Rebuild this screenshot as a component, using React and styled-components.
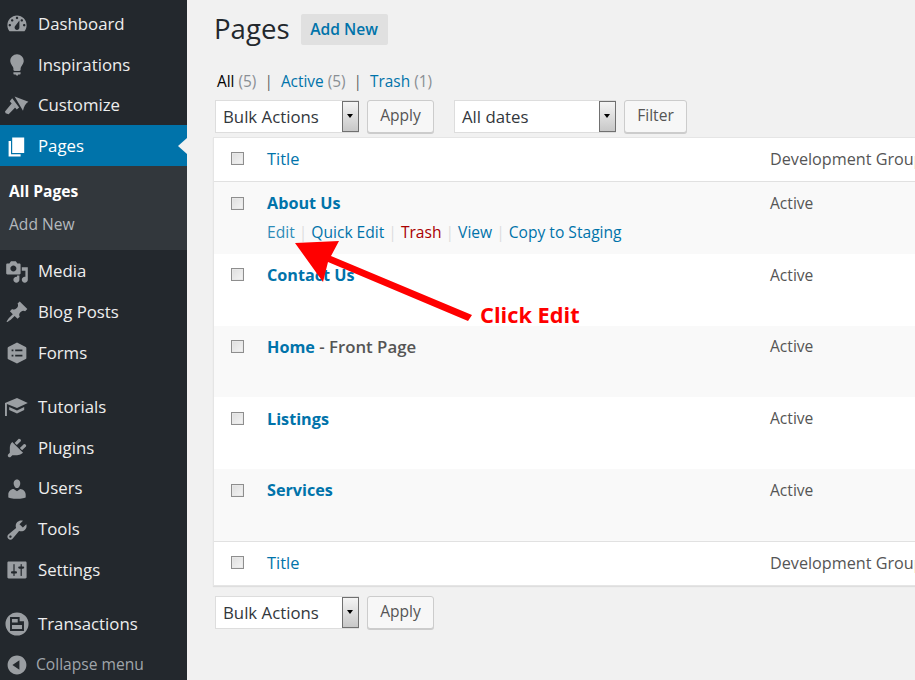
import React from "react";
import styled, { createGlobalStyle } from "styled-components";

const Global = createGlobalStyle`
  html, body { margin: 0; padding: 0; height: 680px; overflow: hidden; background: #f1f1f1; }
  body { font-family: "Open Sans", "Noto Sans", sans-serif; font-size: 16.8px; color: #444; }
`;

const Page = styled.div`
  position: relative;
  display: flex;
  width: 915px;
  height: 680px;
  overflow: hidden;
`;
const Sidebar = styled.nav`
  flex: 0 0 187px;
  background: #23282d;
  padding-top: 3px;
  box-sizing: border-box;
  overflow: hidden;
`;
const MenuItem = styled.div`
  position: relative;
  display: flex;
  align-items: center;
  box-sizing: border-box;
  height: 40.8px;
  padding-top: 1.6px;
  margin-top: ${(p) => (p.$sep ? "13.2px" : "0")};
  color: ${(p) => (p.$active ? "#fff" : "#eee")};
  background: ${(p) => (p.$active ? "#0073aa" : "transparent")};
  line-height: 1;
  font-size: 16.8px;
  white-space: nowrap;
  svg { flex: 0 0 24px; margin-left: 5px; margin-right: 9px; fill: ${(p) => (p.$active ? "#fff" : "#9a9ea2")}; }
`;
const Notch = styled.span`
  position: absolute;
  right: 0;
  top: 13px;
  width: 0;
  height: 0;
  border: 8px solid transparent;
  border-right-color: #f1f1f1;
  border-left-width: 0;
  border-right-width: 9px;
`;
const Submenu = styled.div`
  background: #32373c;
  height: 84.2px;
  padding-top: 9px;
  box-sizing: border-box;
`;
const SubLink = styled.div`
  height: 33px;
  line-height: 33px;
  padding-left: 9px;
  font-size: 15.6px;
  font-weight: ${(p) => (p.$current ? 700 : 400)};
  color: ${(p) => (p.$current ? "#fff" : "#b4b9be")};
`;
const CollapseItem = styled(MenuItem)`
  color: #a0a5aa;
  margin-top: 0;
  font-size: 15.6px;
  svg { margin-right: 7px; }
`;
const Main = styled.main`
  flex: 1;
  min-width: 0;
  padding-left: 27px;
  overflow: hidden;
`;
const Heading = styled.div`
  display: flex;
  align-items: center;
  height: 45px;
  margin-top: 7px;
`;
const H1 = styled.h1`
  margin: -2px 11px 0 0;
  font-size: 27.6px;
  font-weight: 400;
  color: #23282d;
  line-height: 45px;
`;
const AddNew = styled.a`
  display: block;
  width: 87px;
  height: 31px;
  line-height: 31px;
  text-align: center;
  background: #e0e0e0;
  border-radius: 2px;
  color: #0073aa;
  font-size: 15.6px;
  font-weight: 600;
`;
const Views = styled.div`
  display: flex;
  align-items: center;
  height: 24px;
  margin: 17px 0 0 3px;
  font-size: 15.4px;
  white-space: nowrap;
  color: #72777c;
`;
const ViewLink = styled.a`
  color: ${(p) => (p.$on ? "#000" : "#0073aa")};
`;
const ViewSep = styled.span`
  color: #666;
  margin: 0 8px;
`;
const Count = styled.span`
  color: #8a8f94;
  margin-left: 4px;
`;
const Nav = styled.div`
  display: flex;
  align-items: center;
  height: 33px;
  margin: ${(p) => (p.$bottom ? "10px 0 0 1px" : "7px 0 4px 1px")};
`;
const Select = styled.div`
  position: relative;
  box-sizing: border-box;
  width: ${(p) => p.$w}px;
  height: 33px;
  margin-left: ${(p) => p.$ml || 0}px;
  background: #fff;
  border: 1px solid #ddd;
  padding-left: 7px;
  line-height: 31px;
  font-size: 16.8px;
  color: #32373c;
`;
const SelectArrow = styled.span`
  position: absolute;
  right: -1px;
  top: 0;
  bottom: 0;
  width: 17px;
  box-sizing: border-box;
  border: 1px solid #707070;
  background: linear-gradient(#f4f4f4, #c8c8c8);
  &::after {
    content: "";
    position: absolute;
    left: 4px;
    top: 12px;
    border: 3.5px solid transparent;
    border-top: 4px solid #000;
    border-bottom-width: 0;
  }
`;
const Button = styled.div`
  box-sizing: border-box;
  width: ${(p) => p.$w}px;
  height: 33px;
  margin-left: 8px;
  border: 1px solid #ccc;
  border-radius: 3px;
  background: #f7f7f7;
  box-shadow: 0 1px 0 #ccc;
  line-height: 29px;
  text-align: center;
  font-size: 15.6px;
  color: #555;
`;
const Table = styled.div`
  width: 880px;
  margin-left: -1px;
  background: #fff;
  box-shadow: 0 1px 1px rgba(0, 0, 0, 0.08);
  border: 1px solid #e5e5e5;
  border-right: 0;
  box-sizing: border-box;
`;
const Row = styled.div`
  display: grid;
  grid-template-columns: 53px 503px 1fr;
  height: ${(p) => p.$h}px;
  background: ${(p) => (p.$alt ? "#f9f9f9" : "#fff")};
  border-top: ${(p) => (p.$line ? "1px solid #e1e1e1" : "0")};
  border-bottom: ${(p) => (p.$lineB ? "1px solid #e1e1e1" : "0")};
  box-sizing: border-box;
  padding-top: ${(p) => p.$pt || 9}px;
  font-size: 15.6px;
  line-height: 24px;
`;
const Check = styled.span`
  display: block;
  box-sizing: border-box;
  width: 13px;
  height: 13px;
  margin: ${(p) => p.$mt || 5}px 0 0 17px;
  border: 1px solid #8e8e8e;
  box-shadow: inset 0 0 0 1px #e8e8e8;
  background: linear-gradient(135deg, #dedede, #f4f4f4);
`;
const HeadLink = styled.a`
  color: #0073aa;
  font-size: 16.4px;
`;
const PageTitle = styled.div`
  font-weight: 600;
  font-size: 16.8px;
  color: #555;
`;
const TitleLink = styled.a`
  color: #0073aa;
  font-weight: 700;
  font-size: 16.2px;
`;
const Actions = styled.div`
  display: flex;
  margin-top: 5px;
  font-size: 15.6px;
  white-space: nowrap;
`;
const Action = styled.a`
  color: ${(p) => p.$c || "#0073aa"};
`;
const ActionSep = styled.span`
  color: #ddd;
  margin: 0 4px;
`;
const Group = styled.div`
  color: #555;
  white-space: nowrap;
  margin-top: ${(p) => p.$mt || 0}px;
  font-size: ${(p) => (p.$head ? 16.2 : 15.6)}px;
`;
const Annotation = styled.svg`
  position: absolute;
  left: 0;
  top: 0;
  pointer-events: none;
`;
const ClickLabel = styled.div`
  position: absolute;
  left: 480px;
  top: 299px;
  color: #f00;
  font-size: 21.8px;
  line-height: 32px;
  font-weight: 700;
  white-space: nowrap;
`;

const Icon = ({ children }) => (
  <svg width="24" height="24" viewBox="0 0 20 20">{children}</svg>
);
const P = (d) => <path d={d} fillRule="evenodd" />;

const icons = {
  dashboard: P("M3.76 16h12.48c1.1-1.37 1.76-3.11 1.76-5 0-4.42-3.58-8-8-8s-8 3.58-8 8c0 1.89.66 3.63 1.76 5zM10 4c.55 0 1 .45 1 1s-.45 1-1 1-1-.45-1-1 .45-1 1-1zM6 6c.55 0 1 .45 1 1s-.45 1-1 1-1-.45-1-1 .45-1 1-1zm8 0c.55 0 1 .45 1 1s-.45 1-1 1-1-.45-1-1 .45-1 1-1zm-5.37 5.55L12 7v6c0 1.1-.9 2-2 2s-2-.9-2-2c0-.57.24-1.08.63-1.45zM4 10c.55 0 1 .45 1 1s-.45 1-1 1-1-.45-1-1 .45-1 1-1zm12 0c.55 0 1 .45 1 1s-.45 1-1 1-1-.45-1-1 .45-1 1-1z"),
  bulb: P("M10 1c3.11 0 5.63 2.52 5.63 5.62 0 1.84-2.03 4.58-2.03 4.58-.33.44-.6 1.25-.6 1.8v1c0 .55-.45 1-1 1H8c-.55 0-1-.45-1-1v-1c0-.55-.27-1.36-.6-1.8 0 0-2.02-2.74-2.02-4.58C4.38 3.52 6.89 1 10 1zM7 16.87V16h6v.87c0 .62-.13 1.13-1.25 1.13H11c0 .62-.4 1-1.02 1-.61 0-1-.38-1-1h-.73C7 18 7 17.49 7 16.87z"),
  brush: P("M8 2l11.500 4.400c-2.300 1.400-3.800 4-4.500 7.600zM6 3.500l5.800 7.700-2 1.800L4 6zM5.500 8l3 3.300-5.500 5.500-2.500-.8-.5-1.500z"),
  pages: P("M6 15V2h10v13H6zm-1 1h8v2H3V5h2v11z"),
  media: P("M13 11V4c0-.55-.45-1-1-1h-1.67L9 1H5L3.67 3H2c-.55 0-1 .45-1 1v7c0 .55.45 1 1 1h10c.55 0 1-.45 1-1zM7 4.500c1.38 0 2.500 1.120 2.500 2.500S8.380 9.500 7 9.500 4.500 8.380 4.500 7 5.620 4.500 7 4.500zM14 6h5v10.500c0 1.380-1.120 2.500-2.500 2.500S14 17.880 14 16.500s1.120-2.500 2.500-2.500c.17 0 .34.020.5.050V9h-3V6zm-4 8.050V13h2v3.500c0 1.380-1.120 2.500-2.500 2.500S7 17.880 7 16.500 8.120 14 9.500 14c.17 0 .34.020.5.050z"),
  pin: P("M10.440 3.020l1.820-1.820 6.360 6.350-1.830 1.820c-1.050-.68-2.480-.57-3.410.36l-.75.75c-.92.93-1.040 2.350-.35 3.410l-1.830 1.820-2.410-2.410-2.800 2.790c-.42.42-3.380 2.710-3.800 2.290s1.860-3.390 2.280-3.810l2.790-2.790L4.100 9.360l1.830-1.820c1.050.69 2.480.57 3.400-.36l.75-.75c.93-.92 1.050-2.350.36-3.410z"),
  forms: P("M10 1.200l7.300 3.700c.3.2.5.5.5.900v8.400c0 .4-.2.700-.5.900L10 18.800 2.700 15.200c-.3-.2-.5-.5-.5-.9V5.800c0-.4.2-.7.5-.9L10 1.200zM5.500 7v1.500H7V7H5.500zm3 0v1.500h6V7h-6zm-3 4.500V13H7v-1.500H5.500zm3 0V13h6v-1.500h-6z"),
  tutorials: P("M0 6.700L10 2.500l9 4.200-9 4.100-8.400-3.400V17.500H0zM3.500 10l6.500 3 6-3v2.500l-6 3-6.500-3z"),
  plugins: P("M13.110 4.360L9.870 7.600 8 5.730l3.240-3.240c.35-.34 1.050-.2 1.560.32.52.51.66 1.210.31 1.550zm-8 1.770l.91-1.120 9.010 9.010-1.190.84c-.71.71-2.630 1.160-3.820 1.160H6.140L4.900 17.260c-.59.59-1.540.59-2.120 0-.59-.58-.59-1.530 0-2.120l1.240-1.240v-3.880c0-1.130.4-3.190 1.090-3.890zm7.260 3.970l3.240-3.240c.34-.35 1.040-.21 1.550.31.52.51.66 1.210.31 1.550l-3.240 3.250z"),
  users: P("M10 9.250c-2.270 0-2.730-3.440-2.730-3.440C7 4.020 7.820 2 9.970 2c2.160 0 2.980 2.020 2.710 3.810 0 0-.41 3.440-2.680 3.440zm0 2.570L12.720 10c2.390 0 4.520 2.330 4.520 4.530v2.490s-3.650 1.130-7.240 1.130c-3.650 0-7.240-1.130-7.240-1.130v-2.490c0-2.250 1.940-4.480 4.470-4.480z"),
  tools: P("M16.680 9.770c-1.340 1.340-3.300 1.670-4.950.99l-5.410 6.520c-.99.99-2.590.99-3.580 0s-.99-2.590 0-3.570l6.520-5.420c-.68-1.650-.35-3.610.99-4.950 1.280-1.280 3.120-1.620 4.720-1.060l-2.890 2.890 2.820 2.820 2.860-2.870c.53 1.580.18 3.390-1.080 4.670zM3.810 16.210c.4.39 1.040.39 1.430 0 .4-.4.4-1.040 0-1.430-.39-.4-1.030-.4-1.430 0-.39.39-.39 1.030 0 1.430z"),
  settings: P("M18 16V4c0-.55-.45-1-1-1H3c-.55 0-1 .45-1 1v12c0 .55.45 1 1 1h14c.55 0 1-.45 1-1zM8 11h1c.55 0 1 .45 1 1s-.45 1-1 1H8v1.500c0 .28-.22.5-.5.5s-.5-.22-.5-.5V13H6c-.55 0-1-.45-1-1s.45-1 1-1h1V5.500c0-.28.22-.5.5-.5s.5.22.5.5V11zm5-2h-1c-.55 0-1-.45-1-1s.45-1 1-1h1V5.500c0-.28.22-.5.5-.5s.5.22.5.5V7h1c.55 0 1 .45 1 1s-.45 1-1 1h-1v5.500c0 .28-.22.5-.5.5s-.5-.22-.5-.5V9z"),
  transactions: P("M10 .4a9.600 9.600 0 1 1 0 19.200A9.600 9.600 0 0 1 10 .4zM4.200 4.200h8v3.500h3.600v8.100H4.200zM5.800 5.800h4.800v3H5.800zM5.800 10.800h8.400v3.400H5.800z"),
  collapse: P("M10 2.160c4.330 0 7.840 3.510 7.840 7.840s-3.510 7.840-7.840 7.840S2.160 14.330 2.160 10 5.710 2.160 10 2.160zm2 11.720V6.120L6.180 9.970z"),
};

const Item = ({ icon, label, sep, active }) => (
  <MenuItem $sep={sep} $active={active}>
    <Icon>{icons[icon]}</Icon>
    {label}
    {active && <Notch />}
  </MenuItem>
);

const rows = [
  { title: "About Us", h: 72, alt: true, actions: true, checkTop: 6 },
  { title: "Contact Us", h: 71.5 },
  { title: "Home", suffix: " - Front Page", h: 71.5, alt: true, groupTop: -1 },
  { title: "Listings", h: 72, pad: 10, groupTop: -1 },
  { title: "Services", h: 71.5, alt: true, checkTop: 6 },
];

const TableNav = ({ bottom }) => (
  <Nav $bottom={bottom}>
    <Select $w={144}>Bulk Actions<SelectArrow /></Select>
    <Button $w={67}>Apply</Button>
    {!bottom && <Select $w={162} $ml={20}>All dates<SelectArrow /></Select>}
    {!bottom && <Button $w={63}>Filter</Button>}
  </Nav>
);

export default function App() {
  return (
    <Page>
      <Global />
      <Sidebar>
        <Item icon="dashboard" label="Dashboard" />
        <Item icon="bulb" label="Inspirations" />
        <Item icon="brush" label="Customize" />
        <Item icon="pages" label="Pages" active />
        <Submenu>
          <SubLink $current>All Pages</SubLink>
          <SubLink>Add New</SubLink>
        </Submenu>
        <Item icon="media" label="Media" />
        <Item icon="pin" label="Blog Posts" />
        <Item icon="forms" label="Forms" />
        <Item icon="tutorials" label="Tutorials" sep />
        <Item icon="plugins" label="Plugins" />
        <Item icon="users" label="Users" />
        <Item icon="tools" label="Tools" />
        <Item icon="settings" label="Settings" />
        <Item icon="transactions" label="Transactions" sep />
        <CollapseItem>
          <Icon>{icons.collapse}</Icon>
          Collapse menu
        </CollapseItem>
      </Sidebar>
      <Main>
        <Heading>
          <H1>Pages</H1>
          <AddNew>Add New</AddNew>
        </Heading>
        <Views>
          <ViewLink $on>All</ViewLink><Count>(5)</Count>
          <ViewSep>|</ViewSep>
          <ViewLink>Active</ViewLink><Count>(5)</Count>
          <ViewSep>|</ViewSep>
          <ViewLink>Trash</ViewLink><Count>(1)</Count>
        </Views>
        <TableNav />
        <Table>
          <Row $h={44} $lineB $pt={9}>
            <Check />
            <HeadLink>Title</HeadLink>
            <Group $head>Development Group</Group>
          </Row>
          {rows.map((r) => (
            <Row key={r.title} $h={r.h} $alt={r.alt} $pt={r.pad}>
              <Check $mt={r.checkTop} />
              <div>
                <PageTitle>
                  <TitleLink>{r.title}</TitleLink>
                  {r.suffix}
                </PageTitle>
                {r.actions && (
                  <Actions>
                    <Action $c="#2e8cb8">Edit</Action><ActionSep>|</ActionSep>
                    <Action>Quick Edit</Action><ActionSep>|</ActionSep>
                    <Action $c="#a00">Trash</Action><ActionSep>|</ActionSep>
                    <Action>View</Action><ActionSep>|</ActionSep>
                    <Action>Copy to Staging</Action>
                  </Actions>
                )}
              </div>
              <Group $mt={r.groupTop}>Active</Group>
            </Row>
          ))}
          <Row $h={44} $line $pt={9}>
            <Check />
            <HeadLink>Title</HeadLink>
            <Group $head>Development Group</Group>
          </Row>
        </Table>
        <TableNav bottom />
      </Main>
      <Annotation width="915" height="680" viewBox="0 0 915 680">
        <polygon fill="#f00" points="295,243 339,241 331,256 472,315 468,321 328,262 323,282" />
      </Annotation>
      <ClickLabel>Click Edit</ClickLabel>
    </Page>
  );
}
